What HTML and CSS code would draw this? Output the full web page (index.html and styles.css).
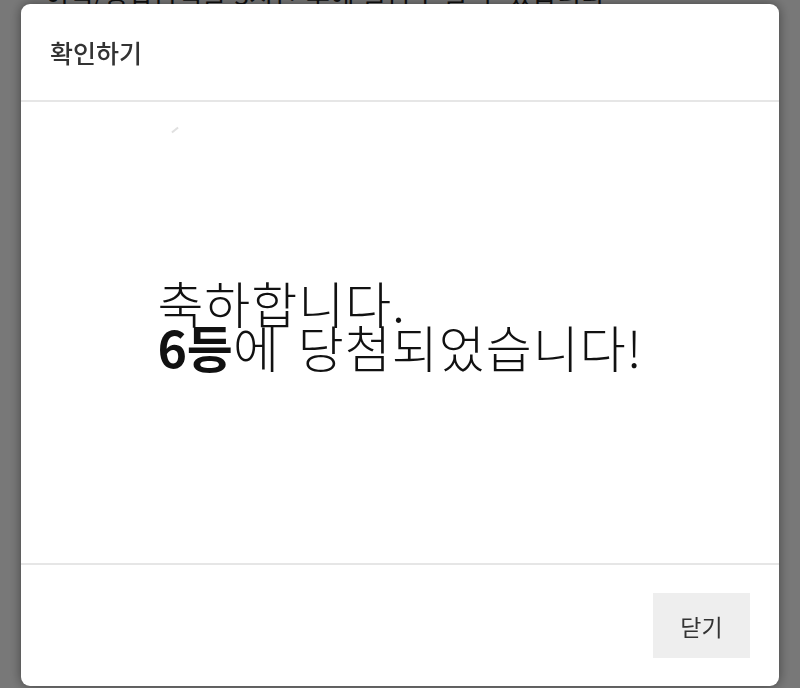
FILE: index.html
```html
<!DOCTYPE html>
<html lang="ko">
<head>
<meta charset="utf-8">
<title>확인하기</title>
<link rel="stylesheet" href="styles.css">
</head>
<body>
<div class="page">
  <p class="page-text">이익/총합금액을 3시간 후에 출금 받을 수 있습니다</p>
</div>
<div class="overlay">
  <div class="modal">
    <div class="modal-header">
      <h2 class="modal-title">확인하기</h2>
    </div>
    <div class="modal-body">
      <span class="mark"></span>
      <p class="message">축하합니다.<br><strong>6등</strong>에 당첨되었습니다!</p>
    </div>
    <div class="modal-footer">
      <button class="btn-close" type="button">닫기</button>
    </div>
  </div>
</div>
</body>
</html>
```

FILE: styles.css
```css
html, body {
  margin: 0;
  padding: 0;
  height: 100%;
  overflow: hidden;
}
body {
  font-family: "Noto Sans CJK KR", "Noto Sans", sans-serif;
  background: #ffffff;
  color: #333;
}
.page {
  padding: 0 45px;
}
.page-text {
  margin: -21px 0 0;
  font-size: 26px;
  line-height: 30px;
  letter-spacing: 0.5px;
  color: #222;
  white-space: nowrap;
}
.overlay {
  position: fixed;
  inset: 0;
  background: rgba(0, 0, 0, 0.53);
  padding: 4px 21px 0;
}
.modal {
  height: 682px;
  background: #fff;
  border-radius: 9px;
  box-shadow: 0 0 12px rgba(0, 0, 0, 0.45);
  display: flex;
  flex-direction: column;
  overflow: hidden;
}
.modal-header {
  height: 98px;
  border-bottom: 2px solid #e6e6e6;
  display: flex;
  align-items: center;
  padding: 0 29px;
  box-sizing: border-box;
  flex: none;
}
.modal-title {
  margin: 0;
  font-size: 25px;
  font-weight: 500;
  color: #333;
  line-height: 1;
}
.modal-body {
  position: relative;
  height: 461px;
  flex: none;
  display: flex;
  justify-content: center;
  align-items: center;
  padding-bottom: 18px;
  box-sizing: border-box;
}
.mark {
  position: absolute;
  left: 150px;
  top: 27px;
  width: 8px;
  height: 2px;
  background: #ccc;
  transform: rotate(-40deg);
  opacity: 0.6;
}
.message {
  margin: 0;
  font-size: 50px;
  line-height: 44px;
  font-weight: 300;
  letter-spacing: 1px;
  word-spacing: 3px;
  color: #111;
  text-align: left;
}
.message strong {
  font-weight: 700;
  letter-spacing: 0;
}
.modal-footer {
  flex: 1;
  border-top: 2px solid #e6e6e6;
  display: flex;
  justify-content: flex-end;
  align-items: flex-start;
  padding: 28px 29px 0;
}
.btn-close {
  width: 97px;
  height: 65px;
  border: none;
  background: #eeeeee;
  font-family: inherit;
  font-size: 23px;
  color: #333;
  padding: 0;
  cursor: pointer;
}
```
